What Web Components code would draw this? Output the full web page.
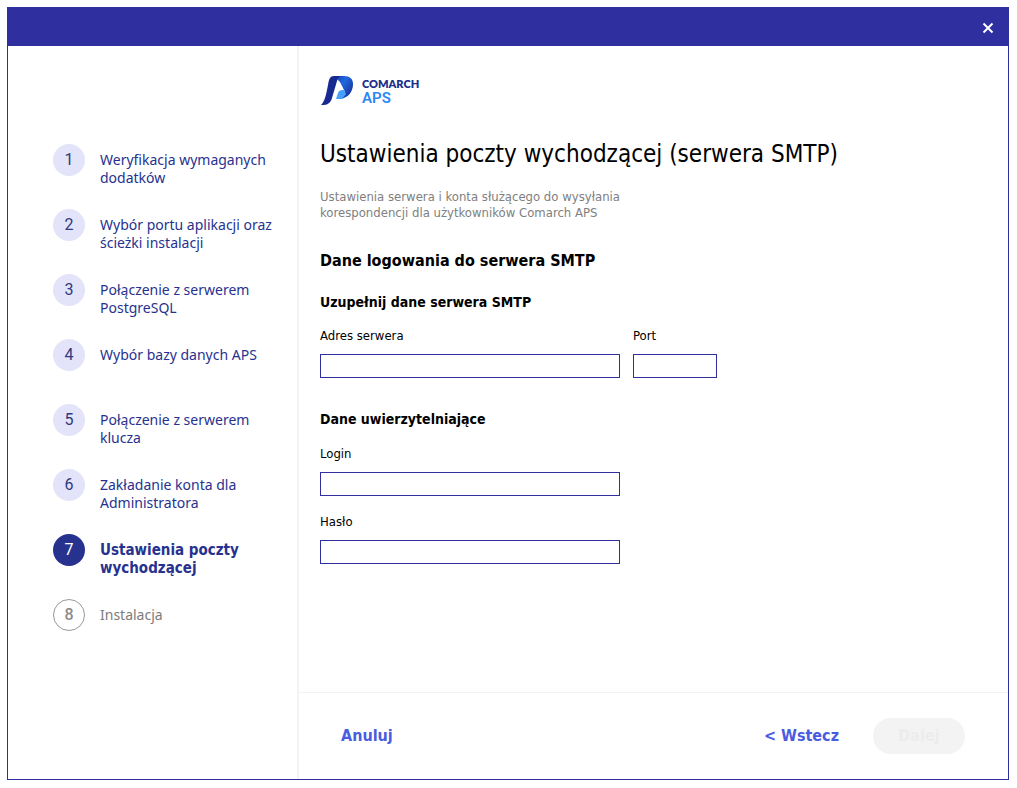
<!DOCTYPE html>
<html lang="pl">
<head>
<meta charset="utf-8">
<title>Comarch APS</title>
<style>
  body {
    margin: 0;
    background: #fff;
    color: #000;
    font-family: "DejaVu Sans Condensed", "DejaVu Sans", sans-serif;
  }
</style>
</head>
<body>
<aps-window>
  <aps-steps slot="steps">
    <aps-step number="1" state="done">Weryfikacja wymaganych<br>dodatków</aps-step>
    <aps-step number="2" state="done">Wybór portu aplikacji oraz<br>ścieżki instalacji</aps-step>
    <aps-step number="3" state="done">Połączenie z serwerem<br>PostgreSQL</aps-step>
    <aps-step number="4" state="done">Wybór bazy danych APS</aps-step>
    <aps-step number="5" state="done">Połączenie z serwerem<br>klucza</aps-step>
    <aps-step number="6" state="done">Zakładanie konta dla<br>Administratora</aps-step>
    <aps-step number="7" state="current">Ustawienia poczty<br>wychodzącej</aps-step>
    <aps-step number="8" state="todo">Instalacja</aps-step>
  </aps-steps>
  <aps-smtp-form></aps-smtp-form>
  <aps-footer slot="footer"></aps-footer>
</aps-window>

<script>
  class ApsElement extends HTMLElement {
    constructor() {
      super();
      const t = document.createElement('template');
      t.innerHTML = this.constructor.markup;
      this.attachShadow({ mode: 'open' }).append(t.content.cloneNode(true));
    }
  }

  customElements.define('aps-window', class extends ApsElement {
    static markup = `
      <style>
        :host { display: flex; box-sizing: border-box; min-height: 100vh; padding: 7px 8px 8px 7px; }
        .frame { flex: 1; display: flex; flex-direction: column; border: 1px solid #2f2fa0; }
        header { display: flex; justify-content: flex-end; align-items: center; height: 38px; padding-right: 12px; background: #2f2fa0; }
        header button { display: flex; padding: 3px 2px 1px; border: 0; background: none; }
        .body { flex: 1; display: grid; grid-template-columns: 291px 1fr; }
        aside { box-sizing: border-box; border-right: 2px solid #f3f3f3; }
        main { display: flex; flex-direction: column; min-width: 0; }
        .content { flex: 1; }
      </style>
      <div class="frame">
        <header>
          <button type="button" aria-label="Zamknij">
            <svg width="12" height="12" viewBox="0 0 12 12" fill="none" stroke="#fff" stroke-width="2"><path d="M1.500 1.500l9 9M10.500 1.500l-9 9"/></svg>
          </button>
        </header>
        <div class="body">
          <aside><slot name="steps"></slot></aside>
          <main>
            <div class="content"><slot></slot></div>
            <slot name="footer"></slot>
          </main>
        </div>
      </div>`;
  });

  customElements.define('aps-steps', class extends ApsElement {
    static markup = `
      <style>
        :host { display: grid; grid-auto-rows: 65px; padding: 98px 0 0 45px; }
      </style>
      <slot></slot>`;
  });

  customElements.define('aps-step', class extends ApsElement {
    static markup = `
      <style>
        :host { display: flex; align-items: flex-start; gap: 15px; color: #27328f; font: 400 14px/18px "Noto Sans", sans-serif; white-space: nowrap; }
        .dot { box-sizing: border-box; flex: none; width: 32px; height: 32px; border-radius: 50%; background: #e3e3fa; color: #303a80; text-align: center; font: 400 16px/32px Roboto, sans-serif; }
        .text { padding-top: 7px; }
        :host([state="current"]) { font: 700 15px/18px "DejaVu Sans Condensed", "DejaVu Sans", sans-serif; }
        :host([state="current"]) .dot { background: #27328f; color: #fff; }
        :host([state="todo"]) { color: #7c7c7c; }
        :host([state="todo"]) .dot { border: 1px solid #999; background: #fff; color: #8c8c8c; font-weight: 500; line-height: 30px; }
      </style>
      <span class="dot"></span>
      <span class="text"><slot></slot></span>`;
    connectedCallback() {
      this.shadowRoot.querySelector('.dot').textContent = this.getAttribute('number');
    }
  });

  customElements.define('aps-logo', class extends ApsElement {
    static markup = `
      <style>
        :host { display: flex; align-items: center; gap: 9px; }
        svg { display: block; }
        .name { display: flex; flex-direction: column; color: #1d2f8c; font: 800 11px/14px Lato, sans-serif; }
        .aps { color: #2b87f5; font: 600 15px/14px Roboto, sans-serif; }
      </style>
      <svg width="33" height="31" viewBox="0 0 33 31">
        <defs>
          <linearGradient id="bowl" x1="0" y1="0" x2="1" y2=".8"><stop offset="0" stop-color="#1c3fb0"/><stop offset=".45" stop-color="#1f68de"/><stop offset="1" stop-color="#1a2b96"/></linearGradient>
        </defs>
        <path d="M14 1h10c6 0 9 3 9 8 0 8-5 14-13 15l5-7-5-10z" fill="url(#bowl)"/>
        <path d="M24 15l2 4-4 5h-6l2-6c1-3 3-3 6-3z" fill="#45a0ff"/>
        <path d="M14 1h9c-4 0-5 2-6 5l-5 17c-1 4-4 7-8 7H1C5 26 6 20 8 10 9 4 10 1 14 1z" fill="#182a92"/>
      </svg>
      <div class="name"><span>COMARCH</span><span class="aps">APS</span></div>`;
  });

  customElements.define('aps-field', class extends ApsElement {
    static markup = `
      <style>
        :host { display: block; }
        label { display: block; font-size: 13px; line-height: 16px; margin-bottom: 10px; }
        input { display: block; box-sizing: border-box; width: 100%; height: 24px; padding: 0 4px; border: 1px solid #2f2fa0; border-radius: 0; background: #fff; font: inherit; font-size: 13px; outline: none; }
      </style>
      <label for="field"></label>
      <input id="field">`;
    connectedCallback() {
      this.shadowRoot.querySelector('label').textContent = this.getAttribute('label');
      this.shadowRoot.querySelector('input').type = this.getAttribute('type') || 'text';
    }
  });

  customElements.define('aps-smtp-form', class extends ApsElement {
    static markup = `
      <style>
        :host { display: block; padding: 29px 20px 24px 21px; }
        h1 { margin: 33px 0 0; font-size: 24px; line-height: 30px; font-weight: 400; }
        p { margin: 20px 0 0; color: #808080; font-size: 13px; line-height: 16px; }
        h2 { margin: 30px 0 0; font-size: 16px; line-height: 20px; }
        h3 { margin: 0; font-size: 14px; line-height: 18px; }
        .server { margin-top: 22px; }
        .login { margin-top: 32px; }
        .row { display: flex; gap: 13px; margin-top: 17px; }
        .wide { width: 300px; }
        .port { width: 84px; }
        .stack { display: grid; gap: 18px; margin-top: 18px; }
      </style>
      <aps-logo></aps-logo>
      <h1>Ustawienia poczty wychodzącej (serwera SMTP)</h1>
      <p>Ustawienia serwera i konta służącego do wysyłania<br>korespondencji dla użytkowników Comarch APS</p>
      <h2>Dane logowania do serwera SMTP</h2>
      <h3 class="server">Uzupełnij dane serwera SMTP</h3>
      <div class="row">
        <aps-field class="wide" label="Adres serwera"></aps-field>
        <aps-field class="port" label="Port"></aps-field>
      </div>
      <h3 class="login">Dane uwierzytelniające</h3>
      <div class="stack">
        <aps-field class="wide" label="Login"></aps-field>
        <aps-field class="wide" label="Hasło" type="password"></aps-field>
      </div>`;
  });

  customElements.define('aps-footer', class extends ApsElement {
    static markup = `
      <style>
        :host { display: flex; align-items: center; box-sizing: border-box; height: 87px; padding: 0 43px 0 42px; border-top: 1px solid #f3f3f3; }
        button { padding: 0; border: 0; background: none; color: #4a5ce0; font: inherit; font-size: 16px; line-height: 20px; font-weight: 700; }
        .next { width: 92px; height: 36px; margin-left: 34px; border-radius: 18px; background: #f3f3f3; color: #ececec; }
        .back { margin-left: auto; }
      </style>
      <button type="button">Anuluj</button>
      <button type="button" class="back">&lt; Wstecz</button>
      <button type="button" class="next" disabled>Dalej</button>`;
  });
</script>
</body>
</html>
